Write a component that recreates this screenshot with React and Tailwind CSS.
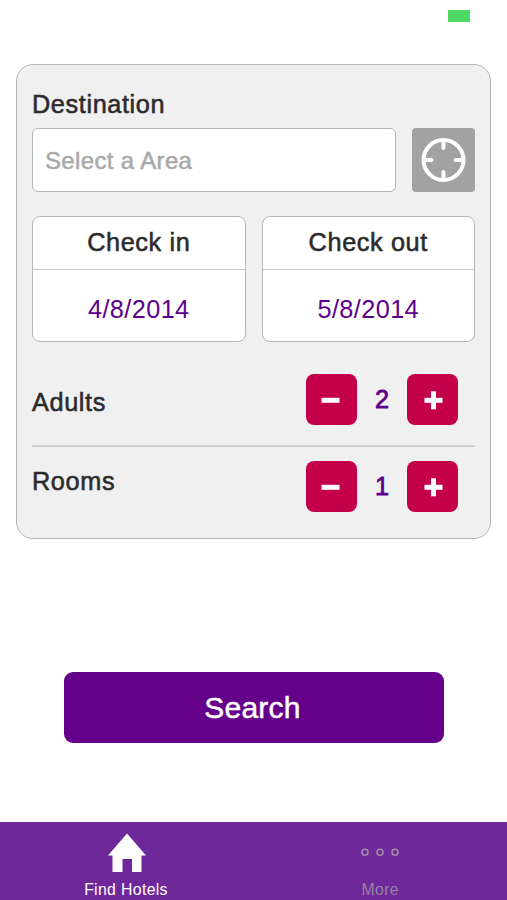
import React, { useState } from 'react';

const label = 'text-[25.3px] leading-[30px] text-[#2b2b2d] [-webkit-text-stroke:0.55px_#2b2b2d]';

function DateCard({ title, value }) {
  return (
    <button className="flex flex-col flex-1 h-[126px] bg-white border border-[#b6b6b8] rounded-lg overflow-hidden">
      <span className={`w-full h-[53px] pt-[10px] border-b border-[#c8c8ca] tracking-[0.6px] ${label}`}>{title}</span>
      <span className="w-full pt-[24px] text-[25.3px] leading-[30px] tracking-[0.4px] text-[#5f008c]">{value}</span>
    </button>
  );
}

function StepButton({ plus, onClick }) {
  return (
    <button onClick={onClick} className="w-[51px] h-[51px] bg-[#c4004b] rounded-lg">
      <svg width="51" height="51" viewBox="0 0 51 51" fill="#fff">
        <rect x={plus ? 17.5 : 15.5} y="23.8" width="18" height="5" />
        {plus && <rect x="24" y="17.3" width="5" height="18" />}
      </svg>
    </button>
  );
}

function Stepper({ value, onChange }) {
  return (
    <div className="flex">
      <StepButton onClick={() => onChange(Math.max(1, value - 1))} />
      <span className="w-[50px] pt-[10px] text-center text-[25.3px] leading-[30px] text-[#5f008c] [-webkit-text-stroke:0.8px_#5f008c]">
        {value}
      </span>
      <StepButton plus onClick={() => onChange(value + 1)} />
    </div>
  );
}

export default function App() {
  const [adults, setAdults] = useState(2);
  const [rooms, setRooms] = useState(1);

  return (
    <div className="flex flex-col w-[507px] h-[900px] bg-white overflow-hidden font-['Liberation_Sans',Arial,sans-serif]">
      {/* Status bar, only the battery fill shows */}
      <header className="flex justify-end h-16 pt-[10px] pr-[37px] shrink-0">
        <div className="w-[22px] h-[12px] bg-[#4cd964]" />
      </header>

      <main className="flex flex-col flex-1">
        <section className="mx-4 h-[475px] px-[15px] pt-[24px] bg-[#f0f0f0] border border-[#b6b6b8] rounded-[17px]">
          <h2 className={`tracking-[0.6px] ${label}`}>Destination</h2>

          <div className="flex justify-between mt-[9px]">
            <button className="w-[364px] h-[64px] pl-[12px] pt-[1px] text-left bg-white border border-[#b6b6b8] rounded-md text-[24px] tracking-[0.35px] text-[#a8a8a8] [-webkit-text-stroke:0.5px_#a8a8a8]">
              Select a Area
            </button>
            <button className="w-[63px] h-[64px] bg-[#a2a2a2] rounded-[4px]">
              <svg width="63" height="64" viewBox="0 0 63 64" fill="none" stroke="#fff" strokeWidth="4">
                <circle cx="31.5" cy="32" r="20" />
                <path strokeLinecap="round" d="M31.5 13v7M31.5 44v7M12.5 32h7M43.5 32h7" />
              </svg>
            </button>
          </div>

          <div className="flex gap-4 mt-[24px]">
            <DateCard title="Check in" value="4/8/2014" />
            <DateCard title="Check out" value="5/8/2014" />
          </div>

          <div className="flex justify-between h-[71px] mt-[32px] pr-[17px]">
            <span className={`pt-[13px] tracking-[0.6px] ${label}`}>Adults</span>
            <Stepper value={adults} onChange={setAdults} />
          </div>
          <div className="flex justify-between pt-[14px] pr-[17px] border-t-2 border-[#d0d0d2]">
            <span className={`pt-[5px] tracking-[0.6px] ${label}`}>Rooms</span>
            <Stepper value={rooms} onChange={setRooms} />
          </div>
        </section>

        <button className="w-[380px] h-[71px] mt-[133px] mx-auto pb-[1px] pr-[2px] rounded-[9px] bg-[#640089] text-white text-[30px] tracking-[0.2px] [-webkit-text-stroke:0.5px_#fff]">
          Search
        </button>
      </main>

      <nav className="flex h-[78px] bg-[#6f2899] text-[15.8px] leading-[18px] shrink-0">
        <button className="flex flex-col items-center flex-1 pt-[11px] text-white">
          <svg width="38" height="40" viewBox="0 0 38 40" fill="#fff">
            <path d="M19 0.5L38 22.5H33.5V39H24V26H14.5V39H4.5V22.5H0Z" />
          </svg>
          <span className="mt-[8px] pr-[1.5px] tracking-[0.35px]">Find Hotels</span>
        </button>
        <button className="flex flex-col items-center flex-1 pt-[11px] text-[#9583a6]">
          <svg width="38" height="40" viewBox="0 0 38 40" fill="none" stroke="#9f8fa8" strokeWidth="1.6">
            <circle cx="4" cy="19.2" r="3" />
            <circle cx="19" cy="19.2" r="3" />
            <circle cx="34" cy="19.2" r="3" />
          </svg>
          <span className="mt-[8px] tracking-[0.35px]">More</span>
        </button>
      </nav>
    </div>
  );
}
